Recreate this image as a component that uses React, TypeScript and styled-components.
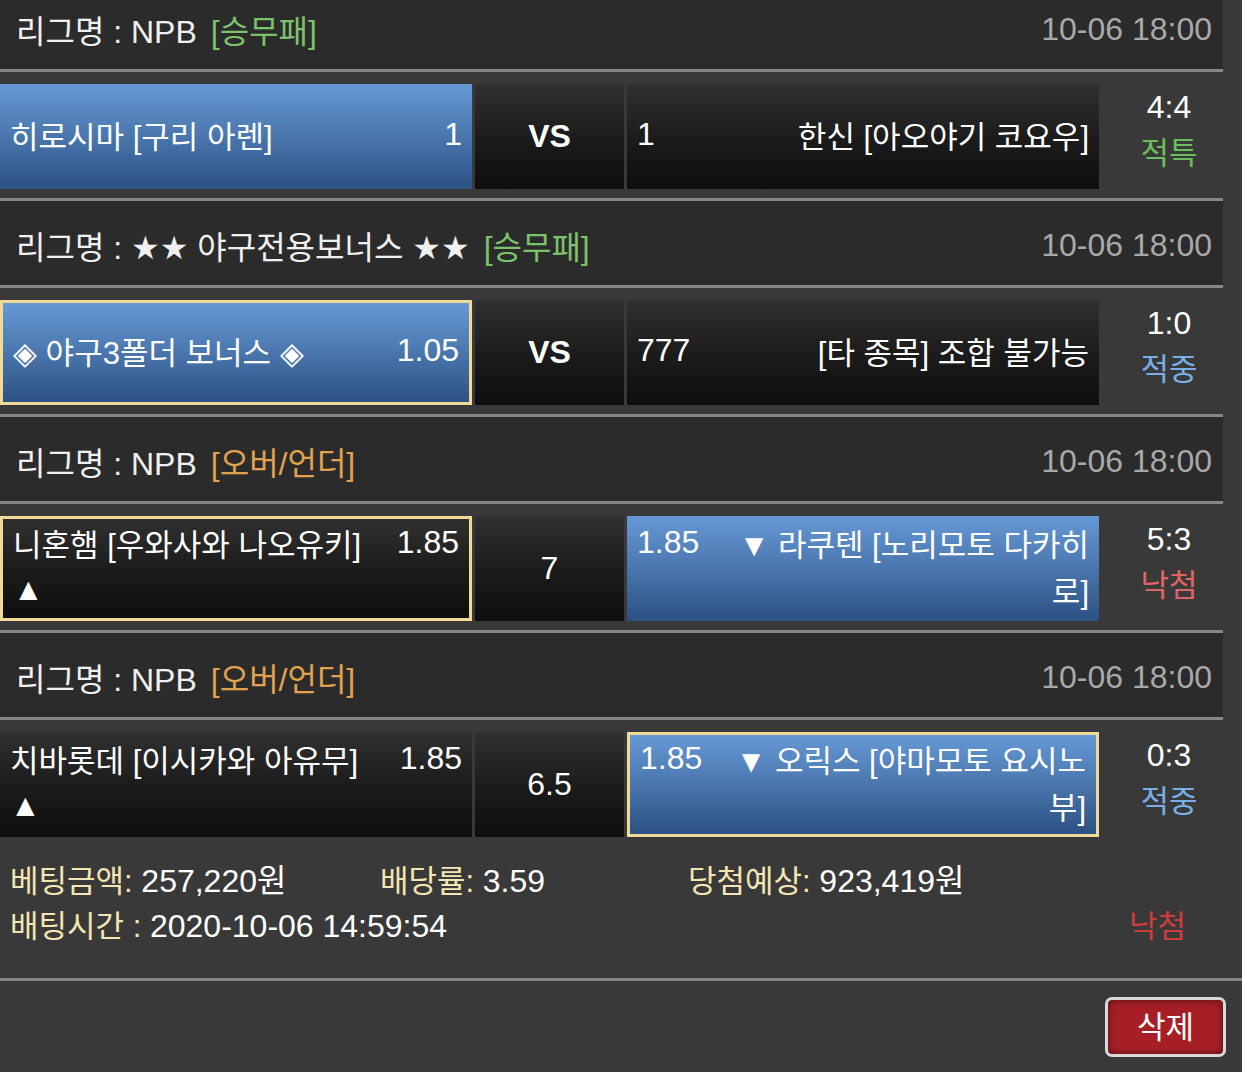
import React from "react";
import styled, { createGlobalStyle, css } from "styled-components";

const GlobalStyle = createGlobalStyle`
  * { box-sizing: border-box; }
  html, body { margin: 0; padding: 0; background: #393939; }
  body {
    font-family: "Liberation Sans", "Noto Sans CJK KR", sans-serif;
    color: #ffffff;
    overflow: hidden;
  }
`;

type Tone = "green" | "blue" | "red";
type Kind = "wdl" | "ou";

interface Side {
  name: string;
  odds: string;
  extra?: string;
  selected?: boolean;
  boxed?: boolean;
}

interface Bet {
  league: string;
  type: string;
  kind: Kind;
  time: string;
  home: Side;
  mid: string;
  midBold?: boolean;
  away: Side;
  score: string;
  status: string;
  tone: Tone;
}

const bets: Bet[] = [
  {
    league: "NPB",
    type: "승무패",
    kind: "wdl",
    time: "10-06 18:00",
    home: { name: "히로시마 [구리 아렌]", odds: "1", selected: true },
    mid: "VS",
    midBold: true,
    away: { name: "한신 [아오야기 코요우]", odds: "1" },
    score: "4:4",
    status: "적특",
    tone: "green",
  },
  {
    league: "★★ 야구전용보너스 ★★",
    type: "승무패",
    kind: "wdl",
    time: "10-06 18:00",
    home: { name: "◈ 야구3폴더 보너스 ◈", odds: "1.05", selected: true, boxed: true },
    mid: "VS",
    midBold: true,
    away: { name: "[타 종목] 조합 불가능", odds: "777" },
    score: "1:0",
    status: "적중",
    tone: "blue",
  },
  {
    league: "NPB",
    type: "오버/언더",
    kind: "ou",
    time: "10-06 18:00",
    home: { name: "니혼햄 [우와사와 나오유키]", odds: "1.85", extra: "▲", boxed: true },
    mid: "7",
    away: { name: "▼ 라쿠텐 [노리모토 다카히", extra: "로]", odds: "1.85", selected: true },
    score: "5:3",
    status: "낙첨",
    tone: "red",
  },
  {
    league: "NPB",
    type: "오버/언더",
    kind: "ou",
    time: "10-06 18:00",
    home: { name: "치바롯데 [이시카와 아유무]", odds: "1.85", extra: "▲" },
    mid: "6.5",
    away: { name: "▼ 오릭스 [야마모토 요시노", extra: "부]", odds: "1.85", selected: true, boxed: true },
    score: "0:3",
    status: "적중",
    tone: "blue",
  },
];

const toneColor: Record<Tone, string> = {
  green: "#6cbd5b",
  blue: "#79aee6",
  red: "#e06464",
};

const Page = styled.div`
  width: 1242px;
  height: 1072px;
  overflow: hidden;
  background: #393939;
`;

const List = styled.div`
  margin-top: -18px;
  width: 1223px;
`;

const LeagueHeader = styled.div`
  height: 90px;
  display: flex;
  align-items: center;
  justify-content: space-between;
  padding: 4px 11px 0 16px;
  background: #2b2b2b;
  border-top: 3px solid #878787;
  border-bottom: 3px solid #878787;
`;

const LeagueName = styled.div`
  font-family: "Liberation Sans", "DejaVu Sans", "Noto Sans CJK KR", sans-serif;
  font-size: 32px;
  color: #f0f0f0;
  white-space: nowrap;
`;

const BetType = styled.span<{ $kind: Kind }>`
  margin-left: 14px;
  color: ${(p) => (p.$kind === "wdl" ? "#7cc26a" : "#e0a24f")};
`;

const KickOff = styled.div`
  font-size: 32px;
  color: #a9a9a9;
`;

const MatchRow = styled.div`
  display: flex;
  gap: 3px;
  height: 105px;
  margin: 12px 0 9px;
`;

const darkFill = css`
  background: linear-gradient(to bottom, #303030 0%, #1c1c1c 50%, #0e0e0e 100%);
`;

const blueFill = css`
  background: linear-gradient(to bottom, #6699d5 0%, #4a76ad 50%, #2c5183 100%);
`;

const TeamCell = styled.div<{ $selected?: boolean; $boxed?: boolean }>`
  width: 472px;
  flex: none;
  height: 105px;
  display: flex;
  flex-direction: column;
  justify-content: center;
  padding: 0 10px 5px;
  border: ${(p) => (p.$boxed ? "3px solid #f1da98" : "none")};
  ${(p) => (p.$selected ? blueFill : darkFill)}
`;

const TeamLine = styled.div<{ $align: "start" | "between" | "end" }>`
  display: flex;
  align-items: center;
  justify-content: ${(p) =>
    p.$align === "between" ? "space-between" : p.$align === "end" ? "flex-end" : "flex-start"};
  height: 47px;
  white-space: nowrap;
`;

const TeamName = styled.span`
  font-size: 31px;
  color: #ffffff;
`;

const Odds = styled.span`
  font-size: 32px;
  color: #ffffff;
`;

const MidCell = styled.div<{ $bold?: boolean }>`
  width: 149px;
  flex: none;
  display: flex;
  align-items: center;
  justify-content: center;
  font-size: 32px;
  font-weight: ${(p) => (p.$bold ? 700 : 400)};
  ${darkFill}
`;

const ResultCell = styled.div`
  width: 124px;
  flex: none;
  display: flex;
  flex-direction: column;
  align-items: center;
  padding-left: 10px;
  line-height: 46px;
`;

const Score = styled.div`
  font-size: 32px;
  color: #ffffff;
`;

const Status = styled.div<{ $tone: Tone }>`
  font-size: 31px;
  margin-top: 1px;
  color: ${(p) => toneColor[p.$tone]};
`;

const Summary = styled.div`
  padding: 13px 56px 29px 10px;
  border-bottom: 3px solid #878787;
`;

const SummaryGrid = styled.div`
  display: grid;
  grid-template-columns: 370px 308px 1fr;
  height: 45px;
  align-items: center;
`;

const SummaryRow = styled.div`
  display: flex;
  justify-content: space-between;
  align-items: center;
  height: 45px;
`;

const Stat = styled.div`
  white-space: nowrap;
  font-size: 31px;
  line-height: 45px;
`;

const Label = styled.span`
  font-size: 31px;
  color: #f3e6b2;
`;

const Value = styled.span`
  font-size: 32px;
  color: #ffffff;
`;

const FinalStatus = styled.span`
  font-size: 31px;
  line-height: 45px;
  color: #cf3c3c;
`;

const Actions = styled.div`
  display: flex;
  justify-content: flex-end;
  padding: 16px 16px 0 0;
`;

const DeleteButton = styled.button`
  width: 121px;
  height: 60px;
  border: 3px solid #d8d8d8;
  border-radius: 7px;
  background: #a61f27;
  box-shadow: inset 0 0 7px rgba(0, 0, 0, 0.55);
  color: #ffffff;
  font-family: "Liberation Sans", "Noto Sans CJK KR", sans-serif;
  font-size: 31px;
  line-height: 1;
  padding: 0;
  cursor: pointer;
`;

function Team({ side, home }: { side: Side; home: boolean }) {
  return (
    <TeamCell $selected={side.selected} $boxed={side.boxed}>
      <TeamLine $align="between">
        {home ? (
          <>
            <TeamName>{side.name}</TeamName>
            <Odds>{side.odds}</Odds>
          </>
        ) : (
          <>
            <Odds>{side.odds}</Odds>
            <TeamName>{side.name}</TeamName>
          </>
        )}
      </TeamLine>
      {side.extra && (
        <TeamLine $align={home ? "start" : "end"}>
          <TeamName>{side.extra}</TeamName>
        </TeamLine>
      )}
    </TeamCell>
  );
}

export default function App() {
  return (
    <Page>
      <GlobalStyle />
      <List>
        {bets.map((b, i) => (
          <div key={i}>
            <LeagueHeader>
              <LeagueName>
                리그명 : {b.league}
                <BetType $kind={b.kind}>[{b.type}]</BetType>
              </LeagueName>
              <KickOff>{b.time}</KickOff>
            </LeagueHeader>
            <MatchRow>
              <Team side={b.home} home />
              <MidCell $bold={b.midBold}>{b.mid}</MidCell>
              <Team side={b.away} home={false} />
              <ResultCell>
                <Score>{b.score}</Score>
                <Status $tone={b.tone}>{b.status}</Status>
              </ResultCell>
            </MatchRow>
          </div>
        ))}
      </List>
      <Summary>
        <SummaryGrid>
          <Stat>
            <Label>베팅금액:</Label> <Value>257,220원</Value>
          </Stat>
          <Stat>
            <Label>배당률:</Label> <Value>3.59</Value>
          </Stat>
          <Stat>
            <Label>당첨예상:</Label> <Value>923,419원</Value>
          </Stat>
        </SummaryGrid>
        <SummaryRow>
          <Stat>
            <Label>배팅시간 :</Label> <Value>2020-10-06 14:59:54</Value>
          </Stat>
          <FinalStatus>낙첨</FinalStatus>
        </SummaryRow>
      </Summary>
      <Actions>
        <DeleteButton>삭제</DeleteButton>
      </Actions>
    </Page>
  );
}
